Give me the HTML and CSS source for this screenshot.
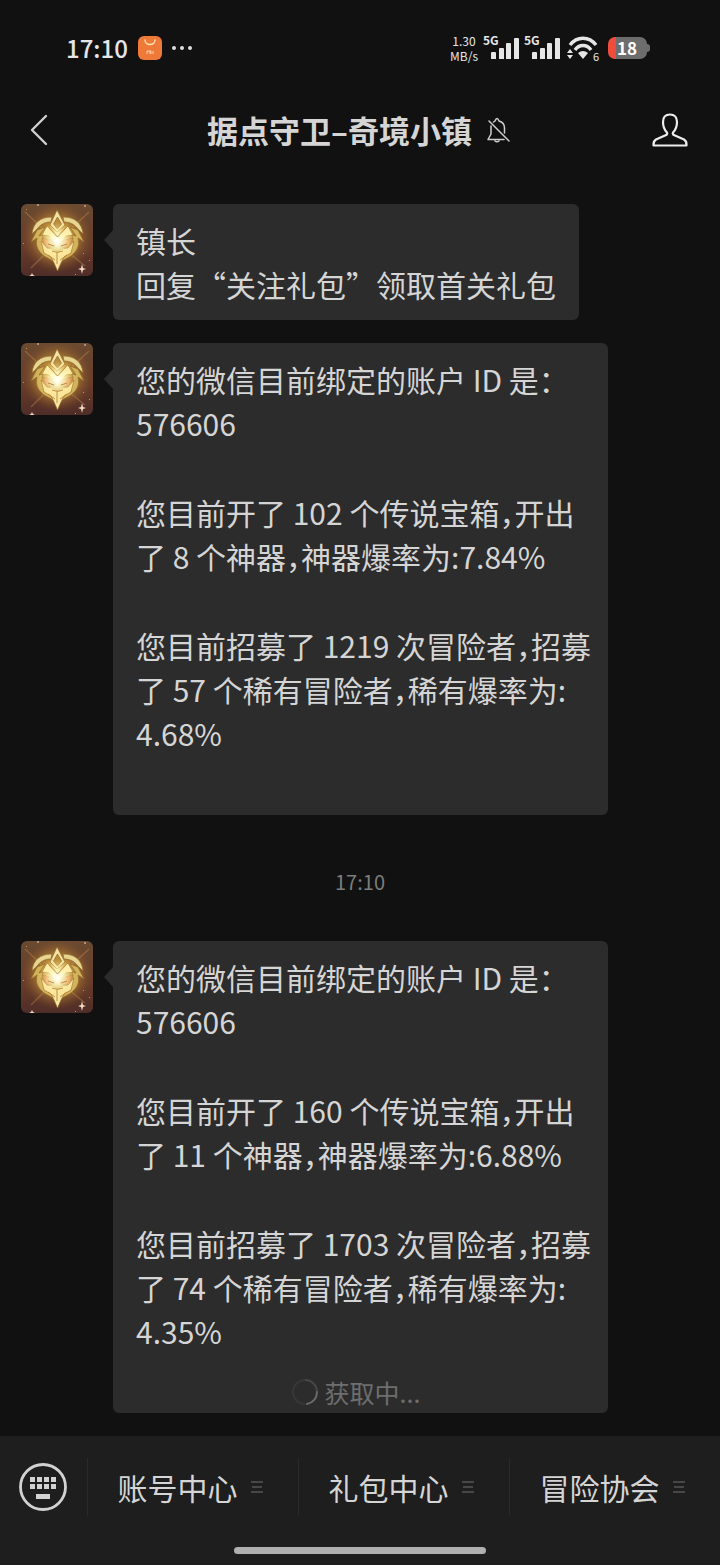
FILE: index.html
```html
<!DOCTYPE html>
<html lang="zh-CN">
<head>
    <meta charset="UTF-8">
    <meta name="viewport" content="width=device-width, initial-scale=1.0">
    <title>据点守卫–奇境小镇</title>
    <link rel="stylesheet" href="styles.css">
</head>
<body>
    <!-- shared artwork -->
    <svg class="defs" width="0" height="0" aria-hidden="true">
        <defs>
            <linearGradient id="avatarBg" x1="0" y1="0" x2="0" y2="1">
                <stop offset="0" stop-color="#6a4a31"/>
                <stop offset="0.6" stop-color="#673d2a"/>
                <stop offset="1" stop-color="#4f2d28"/>
            </linearGradient>
            <radialGradient id="avatarGlow" cx="0.5" cy="0.46" r="0.5">
                <stop offset="0" stop-color="#fff3a8"/>
                <stop offset="0.4" stop-color="#cf9a3e" stop-opacity="0.9"/>
                <stop offset="0.7" stop-color="#9a6a30" stop-opacity="0.6"/>
                <stop offset="1" stop-color="#7a4828" stop-opacity="0"/>
            </radialGradient>
            <radialGradient id="coreGlow">
                <stop offset="0" stop-color="#ffffff"/>
                <stop offset="0.4" stop-color="#fffac0" stop-opacity="0.8"/>
                <stop offset="1" stop-color="#ffd870" stop-opacity="0"/>
            </radialGradient>
        </defs>
        <symbol id="avatar" viewBox="0 0 72 72">
            <rect width="72" height="72" fill="url(#avatarBg)"/>
            <rect width="72" height="72" fill="url(#avatarGlow)"/>
            <path d="M4 8l28 26M68 8L40 34M10 64l20-20M64 62L42 44" stroke="#d9a25a" stroke-width="1.5" opacity="0.3"/>
            <g stroke="#8f6a26" stroke-width="0.7" stroke-linejoin="round">
                <path fill="#e9d592" d="M31 13C19 13 12 19 11 30l5-5c4-5 8-7 14-7zM42 13c12 0 19 6 20 17l-5-5c-4-5-8-7-14-7z"/>
                <path fill="#d3b25c" d="M16 26l-6 12 6-4c-2 8 1 13 7 18l11 6-4-7c-8-5-11-11-8-20l-4 1 6-9zM57 26l6 12-6-4c2 8-1 13-7 18l-11 6 4-7c8-5 11-11 8-20l4 1-6-9z"/>
                <path fill="#f4e2a4" d="M36 6l-7 15 7 7 8-7z"/>
                <path fill="#b98c3c" d="M36.500 13l-4 7 4 5 4-5z"/>
                <path fill="#fff0b2" d="M26 22l10.500 9L47 22l5 9-7 1-5 6-3.500 7-3.500-7-5-6-7-1z"/>
                <path fill="#d97a42" d="M21 34l9 2 4 7-9 1zM52 34l-9 2-4 7 9 1z"/>
                <path fill="#f9e6a2" d="M20 37l6 7 6 1 4.500 3 4.500-3 6-1 6-7-3 12-7 4-3 6-3.500 8-3.500-8-3-6-7-4z"/>
            </g>
            <circle cx="36" cy="37" r="19" fill="url(#coreGlow)"/>
            <path d="M27 40l6 2M46 40l-6 2M31 47q5 3 11 0M28 24l8.500 9 8.500-9M36 49v11M27 51l7 5M46 51l-7 5" fill="none" stroke="#b98434" stroke-width="0.9"/>
            <path fill="#f3d9c0" d="M61 60l1 4 3 1-3 1-1 4-1-4-3-1 3-1zM11 69l1 2 2 1H8l2-1zM64 1l1 1-1 1-1-1zM17 0l1 1-1 1-1-1z"/>
            <path fill="#c98e58" d="M5 5h1v1H5zM54 70h1v1h-1zM68 56h1v1h-1zM2 39h1v1H2zM62 49h1v1h-1z"/>
        </symbol>
        <symbol id="bars" viewBox="0 0 28 22">
            <path fill="#e6e6e6" d="M0 16a1 1 0 0 1 1-1h3a1 1 0 0 1 1 1v6H0zM8 12a1 1 0 0 1 1-1h3a1 1 0 0 1 1 1v10H8zM15 7a1 1 0 0 1 1-1h3a1 1 0 0 1 1 1v15h-5zM23 2a1 1 0 0 1 1-1h3a1 1 0 0 1 1 1v20h-5z"/>
        </symbol>
        <symbol id="more" viewBox="0 0 12 12">
            <path d="M0 1h12M1 6h10M0 11h12" stroke="#555555" stroke-width="1.4"/>
        </symbol>
    </svg>

    <div class="status-bar">
        <div class="status-left">
            <span class="clock">17:10</span>
            <svg width="24" height="24" viewBox="0 0 24 24" aria-hidden="true">
                <rect width="24" height="24" rx="6" fill="#ee7938"/>
                <path d="M7 4c0 6 10 6 10 0" fill="none" stroke="#ffe3b8" stroke-width="1.4" stroke-linecap="round"/>
                <path d="M9 18v-3h3v3M12 15h1v3M15 15v3" fill="none" stroke="#ffd3ae" stroke-width="1"/>
            </svg>
            <svg width="20" height="4" viewBox="0 0 20 4" fill="#dddddd" aria-hidden="true">
                <circle cx="2" cy="2" r="2"/><circle cx="10" cy="2" r="2"/><circle cx="18" cy="2" r="2"/>
            </svg>
        </div>
        <div class="status-right">
            <span class="speed">1.30<br>MB/s</span>
            <span class="signal"><b>5G</b><svg width="28" height="22"><use href="#bars"/></svg></span>
            <span class="signal"><b>5G</b><svg width="28" height="22"><use href="#bars"/></svg></span>
            <span class="wifi">
                <svg width="32" height="24" viewBox="0 0 32 24" aria-hidden="true">
                    <path d="M3 9C10 0 22 0 29 9M8 14c4-6 12-6 16 0" fill="none" stroke="#e6e6e6" stroke-width="3.4"/>
                    <path d="M11 17q5-4 10 0l-5 6zM0 17l3-4 3 4zM0 19l3 4 3-4z" fill="#e6e6e6"/>
                </svg>
                <span class="wifi-num">6</span>
            </span>
            <span class="battery">18</span>
        </div>
    </div>

    <header class="header">
        <button class="back" type="button" aria-label="返回">
            <svg width="18" height="32" viewBox="0 0 18 32">
                <path d="M16 2L2 16l14 14" fill="none" stroke="#cfcfcf" stroke-width="2.4" stroke-linecap="round" stroke-linejoin="round"/>
            </svg>
        </button>
        <h1 class="title">据点守卫–奇境小镇
            <svg width="24" height="28" viewBox="0 0 24 28" fill="none" stroke="#cfcfcf" stroke-width="1.5" stroke-linejoin="round" stroke-linecap="round" aria-hidden="true">
                <path d="M4 10v8l-3 5.500h16M6.500 6L8 5q2-5 4 0 5.500 1.500 5.500 7v5M8 25q2 1.500 4 0M2 5l20 20"/>
            </svg>
        </h1>
        <button class="profile" type="button" aria-label="公众号资料">
            <svg width="36" height="34" viewBox="0 0 36 34" fill="none" stroke="#ededed" stroke-width="2.2" stroke-linejoin="round">
                <path d="M18 1.500c-4.500 0-7 3-7 7.500 0 5 1.500 8 4 10.500.8 2-.5 2.500-2 3L4 26.500C1.500 28 1.500 29.500 1.500 32.500h33c0-3 0-4.500-2.500-6L23 22.500c-1.500-.5-2.800-1-2-3 2.500-2.500 4-5.500 4-10.500 0-4.500-2.500-7.500-7-7.500z"/>
            </svg>
        </button>
    </header>

    <main class="chat">
        <div class="message">
            <svg class="avatar" role="img" aria-label="头像"><use href="#avatar"/></svg>
            <div class="bubble">
                <p>镇长<br>回复“关注礼包”领取首关礼包</p>
            </div>
        </div>

        <div class="message">
            <svg class="avatar" role="img" aria-label="头像"><use href="#avatar"/></svg>
            <div class="bubble report">
                <p>您的微信目前绑定的账户 ID 是：<br>576606</p>
                <p>您目前开了 102 个传说宝箱，开出<br>了 8 个神器，神器爆率为:7.84%</p>
                <p>您目前招募了 1219 次冒险者，招募<br>了 57 个稀有冒险者，稀有爆率为:<br>4.68%</p>
            </div>
        </div>

        <time class="time">17:10</time>

        <div class="message">
            <svg class="avatar" role="img" aria-label="头像"><use href="#avatar"/></svg>
            <div class="bubble report">
                <p>您的微信目前绑定的账户 ID 是：<br>576606</p>
                <p>您目前开了 160 个传说宝箱，开出<br>了 11 个神器，神器爆率为:6.88%</p>
                <p>您目前招募了 1703 次冒险者，招募<br>了 74 个稀有冒险者，稀有爆率为:<br>4.35%</p>
            </div>
        </div>

        <div class="loading">
            <svg width="26" height="26" viewBox="0 0 26 26" fill="none" stroke-width="2" aria-hidden="true">
                <path d="M13 25A12 12 0 0 1 13 1" stroke="#383838"/>
                <path d="M13 1a12 12 0 0 1 12 12" stroke="#484848"/>
                <path d="M25 13a12 12 0 0 1-10 12" stroke="#6a6a6a" stroke-linecap="round"/>
            </svg>
            <span>获取中...</span>
        </div>
    </main>

    <footer class="footer">
        <nav class="menu">
            <button class="keyboard" type="button" aria-label="键盘">
                <svg width="48" height="48" viewBox="0 0 48 48">
                    <circle cx="24" cy="24" r="22.5" fill="none" stroke="#d2d2d2" stroke-width="2.8"/>
                    <path fill="#d2d2d2" d="M11 14h5v5h-5zM18 14h5v5h-5zM25 14h5v5h-5zM32 14h5v5h-5zM11 21h5v5h-5zM18 21h5v5h-5zM25 21h5v5h-5zM32 21h5v5h-5zM17 31h14v5H17z"/>
                </svg>
            </button>
            <button class="menu-item" type="button">账号中心
                <svg width="12" height="12"><use href="#more"/></svg>
            </button>
            <button class="menu-item" type="button">礼包中心
                <svg width="12" height="12"><use href="#more"/></svg>
            </button>
            <button class="menu-item" type="button">冒险协会
                <svg width="12" height="12"><use href="#more"/></svg>
            </button>
        </nav>
        <div class="home-bar"></div>
    </footer>
</body>
</html>
```

FILE: styles.css
```css
* {
    box-sizing: border-box;
}
body {
    font-family: "Noto Sans CJK SC", "Noto Sans", sans-serif;
    font-size: 30px;
    line-height: 44px;
    margin: 0;
    min-height: 100vh;
    display: flex;
    flex-direction: column;
    background-color: #111111;
    color: #d5d5d5;
}
svg {
    display: block;
    flex-shrink: 0;
}
button {
    font: inherit;
    color: inherit;
    background: none;
    border: none;
    padding: 0;
}
.defs {
    position: absolute;
}

/* status bar */
.status-bar {
    display: flex;
    justify-content: space-between;
    align-items: center;
    height: 96px;
    padding: 0 70px 0 66px;
}
.status-left,
.status-right {
    display: flex;
    align-items: center;
    color: #e6e6e6;
}
.status-left {
    gap: 10px;
}
.status-right {
    gap: 5px;
}
.clock {
    font-size: 24px;
    font-weight: 500;
}
.speed {
    font-size: 12px;
    line-height: 15px;
    text-align: center;
}
.signal {
    position: relative;
    padding-left: 8px;
}
.signal b {
    position: absolute;
    top: -6px;
    left: 0;
    font-size: 12px;
    line-height: 18px;
}
.wifi {
    position: relative;
    margin: 0 4px 0 2px;
}
.wifi-num {
    position: absolute;
    right: 0;
    bottom: -4px;
    font-size: 11px;
    line-height: 16px;
}
.battery {
    position: relative;
    width: 39px;
    height: 22px;
    margin-right: 3px;
    padding-right: 1px;
    border-radius: 7px;
    background: linear-gradient(to right, #ef4c3c 8px, #6d6d6d 8px);
    color: #ffffff;
    font-size: 17px;
    font-weight: 700;
    line-height: 22px;
    text-align: center;
}
.battery::after {
    content: "";
    position: absolute;
    top: 7px;
    right: -3px;
    width: 3px;
    height: 8px;
    border-radius: 0 3px 3px 0;
    background-color: #6d6d6d;
}

/* header */
.header {
    display: grid;
    grid-template-columns: 1fr auto 1fr;
    align-items: center;
    height: 68px;
    padding: 0 32px 0 30px;
}
.back {
    justify-self: start;
}
.profile {
    justify-self: end;
}
.title {
    display: flex;
    align-items: center;
    gap: 15px;
    margin: 0;
    font-size: 31px;
    font-weight: 700;
}

/* messages */
.chat {
    position: relative;
    flex: 1;
    display: flex;
    flex-direction: column;
    gap: 23px;
    padding: 40px 21px 23px;
}
.message {
    display: flex;
    align-items: flex-start;
    gap: 20px;
}
.avatar {
    width: 72px;
    height: 72px;
    border-radius: 6px;
}
.bubble {
    position: relative;
    padding: 14px 23px;
    border-radius: 6px;
    background-color: #2c2c2c;
}
.bubble::before {
    content: "";
    position: absolute;
    top: 26px;
    left: -9px;
    border: 10px solid transparent;
    border-left: none;
    border-right: 9px solid #2c2c2c;
}
.bubble p {
    margin: 0;
    white-space: nowrap;
}
.report {
    width: 495px;
    padding-bottom: 60px;
    font-feature-settings: "halt";
}
.report p + p {
    margin-top: 45px;
}
.time {
    align-self: center;
    margin: 22px 0 14px;
    font-size: 20px;
    color: #7c7c7c;
}
.loading {
    position: absolute;
    left: 0;
    right: 8px;
    bottom: 22px;
    display: flex;
    justify-content: center;
    align-items: center;
    gap: 7px;
    font-size: 25px;
    color: #6e6e6e;
}

/* bottom menu */
.footer {
    background-color: #1e1e1e;
    padding: 22px 0 11px;
}
.menu {
    display: flex;
    align-items: center;
}
.keyboard {
    width: 87px;
    padding-left: 19px;
}
.menu-item {
    flex: 1;
    display: flex;
    justify-content: center;
    align-items: center;
    gap: 13px;
    height: 58px;
    padding-right: 6px;
    border-left: 1px solid #2a2a2a;
}
.home-bar {
    width: 35%;
    height: 7px;
    margin: 31px auto 0;
    border-radius: 4px;
    background-color: #b0b0b0;
}
```
